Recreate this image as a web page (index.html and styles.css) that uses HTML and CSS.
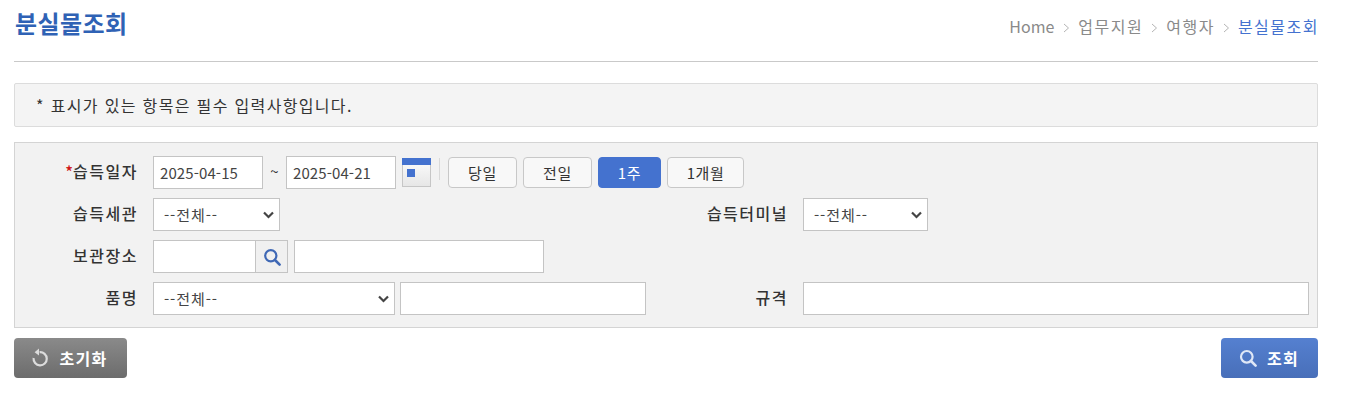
FILE: index.html
```html
<!DOCTYPE html>
<html lang="ko">
<head>
<meta charset="utf-8">
<title>분실물조회</title>
<link rel="stylesheet" href="styles.css">
</head>
<body>
<div class="page">
  <header class="head">
    <h1 class="title">분실물조회</h1>
    <nav class="crumbs">
      <span class="home">Home</span>
      <svg class="sep" width="7" height="10" viewBox="0 0 7 10"><path d="M1 1l4.5 4L1 9" fill="none" stroke="#b4b4b4"/></svg>
      <span>업무지원</span>
      <svg class="sep" width="7" height="10" viewBox="0 0 7 10"><path d="M1 1l4.5 4L1 9" fill="none" stroke="#b4b4b4"/></svg>
      <span>여행자</span>
      <svg class="sep" width="7" height="10" viewBox="0 0 7 10"><path d="M1 1l4.5 4L1 9" fill="none" stroke="#b4b4b4"/></svg>
      <span class="current">분실물조회</span>
    </nav>
  </header>
  <div class="notice">* 표시가 있는 항목은 필수 입력사항입니다.</div>
  <form class="search">
    <label class="label"><span class="req">*</span>습득일자</label>
    <div class="field span3">
      <input class="input date" type="text" value="2025-04-15">
      <span class="tilde">~</span>
      <input class="input date" type="text" value="2025-04-21">
      <svg class="cal" width="29" height="29" viewBox="0 0 29 29">
        <defs><linearGradient id="calbg" x1="0" y1="0" x2="0" y2="1"><stop offset="0" stop-color="#fdfdfd"/><stop offset="1" stop-color="#e6e6e6"/></linearGradient></defs>
        <rect x="0.5" y="0.5" width="28" height="28" fill="url(#calbg)" stroke="#c6c6c6"/>
        <rect x="0" y="0" width="29" height="7" fill="#4472cf"/>
        <rect x="5" y="11" width="8" height="8" fill="#4472cf"/>
      </svg>
      <span class="vline"></span>
      <button class="pill" type="button">당일</button>
      <button class="pill" type="button">전일</button>
      <button class="pill on" type="button">1주</button>
      <button class="pill wide" type="button">1개월</button>
    </div>

    <label class="label">습득세관</label>
    <div class="field">
      <select class="input sel sel-s"><option>--전체--</option></select>
    </div>
    <label class="label">습득터미널</label>
    <div class="field">
      <select class="input sel sel-s2"><option>--전체--</option></select>
    </div>

    <label class="label">보관장소</label>
    <div class="field span3">
      <input class="input code" type="text">
      <button class="lookup" type="button" aria-label="검색">
        <svg width="18" height="18" viewBox="0 0 18 18"><circle cx="7.8" cy="7.8" r="5.6" fill="none" stroke="#3f68b5" stroke-width="2.2"/><path d="M12 12l4.6 4.6" stroke="#3f68b5" stroke-width="2.6" stroke-linecap="round"/></svg>
      </button>
      <input class="input place" type="text">
    </div>

    <label class="label">품명</label>
    <div class="field tight">
      <select class="input sel sel-l"><option>--전체--</option></select>
      <input class="input grow" type="text">
    </div>
    <label class="label">규격</label>
    <div class="field">
      <input class="input full" type="text">
    </div>
  </form>
  <div class="actions">
    <button class="act reset" type="button">
      <svg width="18" height="20" viewBox="0 0 18 20"><path d="M8.6 4.2A6.6 6.6 0 1 1 2.6 10" fill="none" stroke="#dcdcdc" stroke-width="2.2"/><path d="M8 0.6l-4.4 3.6 4.4 3.4z" fill="#dcdcdc"/></svg>
      <span>초기화</span>
    </button>
    <button class="act find" type="button">
      <svg width="18" height="18" viewBox="0 0 18 18"><circle cx="7.8" cy="7.8" r="5.8" fill="none" stroke="#dfe7f6" stroke-width="2.2"/><path d="M12 12l4.6 4.6" stroke="#dfe7f6" stroke-width="2.6" stroke-linecap="round"/></svg>
      <span>조회</span>
    </button>
  </div>
</div>
</body>
</html>
```
FILE: styles.css
```css
* { box-sizing: border-box; }
html, body { margin: 0; padding: 0; background: #fff; }
body { font-family: "Noto Sans CJK KR", "Noto Sans", sans-serif; color: #333; font-size: 14px; }
.page { width: 1304px; margin-left: 14px; }
.head { height: 62px; border-bottom: 1px solid #c9c9c9; display: flex; justify-content: space-between; align-items: flex-start; }
.title { margin: 6px 0 0 1px; font-size: 24px; line-height: 34px; font-weight: 700; color: #2f62b5; letter-spacing: 0.4px; }
.crumbs { display: flex; align-items: center; gap: 8px; margin-top: 15px; font-size: 16px; line-height: 22px; color: #8a8a8a; letter-spacing: 1.5px; }
.crumbs .home { letter-spacing: 0; margin-right: 1px; }
.crumbs .current { color: #4472cf; margin-right: -1px; }
.sep { margin-top: 3px; }
.notice { margin-top: 21px; height: 44px; padding-left: 21px; background: #f4f4f4; border: 1px solid #dcdcdc; border-radius: 2px; font-size: 16px; line-height: 42px; color: #333; letter-spacing: 1.34px; }
.search { margin-top: 15px; height: 186px; padding: 13px 8px 0 0; background: #f2f2f2; border: 1px solid #d4d4d4; display: grid; grid-template-columns: 123px 497px 123px 506px; column-gap: 15px; row-gap: 9px; grid-auto-rows: 33px; }
.label { font-size: 16px; font-weight: 500; text-align: right; line-height: 30px; color: #333; letter-spacing: 1.5px; }
.req { color: #d01818; letter-spacing: 0; }
.field { display: flex; align-items: flex-start; min-width: 0; }
.span3 { grid-column: span 3; }
.input { height: 33px; border: 1px solid #c4c4c4; background: #fff; font-family: inherit; font-size: 15px; color: #444; padding: 0 6px; border-radius: 0; outline: none; letter-spacing: 0.1px; }
.date { width: 110px; }
.tilde { width: 23px; text-align: center; line-height: 30px; font-size: 15px; color: #333; }
.cal { margin: 2px 0 0 6px; flex: none; }
.vline { width: 1px; height: 22px; margin: 2px 8px 0 8px; background: #d9d9d9; }
.pill { width: 69px; height: 31px; margin: 1px 6px 0 0; padding: 0; border: 1px solid #c8c8c8; border-radius: 4px; background: #f8f8f8; font-family: inherit; font-size: 15px; color: #333; letter-spacing: 0.6px; }
.pill.on { width: 63px; background: #4472cf; border-color: #4472cf; color: #fff; }
.pill.wide { width: 77px; }
.sel { appearance: none; padding: 0 0 0 10px; letter-spacing: 0.9px; background: #fff url("data:image/svg+xml,%3Csvg xmlns='http://www.w3.org/2000/svg' width='11' height='8' viewBox='0 0 11 8'%3E%3Cpath d='M1 1.5l4.5 4.5L10 1.5' fill='none' stroke='%23444' stroke-width='2.2'/%3E%3C/svg%3E") no-repeat right 5px center; }
.sel-s { width: 127px; }
.sel-s2 { width: 125px; }
.sel-l { width: 242px; }
.tight { gap: 5px; }
.grow { width: 246px; }
.code { width: 102px; border-right: 0; }
.lookup { width: 33px; height: 33px; padding: 0; border: 1px solid #c4c4c4; background: #f0f0f0; display: flex; align-items: center; justify-content: center; flex: none; }
.place { width: 250px; margin-left: 6px; }
.full { width: 506px; }
.actions { display: flex; justify-content: space-between; margin-top: 10px; }
.act { height: 40px; border: 0; border-radius: 4px; padding: 0; color: #fff; font-family: inherit; font-size: 16px; font-weight: 700; letter-spacing: 1.3px; display: flex; align-items: center; justify-content: center; gap: 10px; }
.reset { width: 113px; padding-right: 2px; background: linear-gradient(#8a8a8a, #6c6c6c); }
.find { width: 97px; gap: 10px; padding-right: 1px; background: linear-gradient(#5580d0, #486fb9); }
```
